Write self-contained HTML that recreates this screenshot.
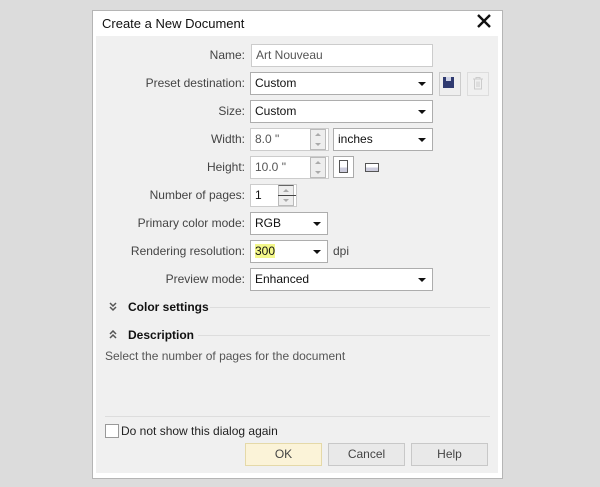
<!DOCTYPE html><html><head><style>
body{margin:0;width:600px;height:487px;background:#dcdcdc;position:relative;font-family:"Liberation Sans",sans-serif;font-size:12px;color:#222;overflow:hidden}
.a{position:absolute}
.dlg{left:92px;top:10px;width:409px;height:467px;background:#fff;border:1px solid #b5b5b5}
.cnt{left:96px;top:36px;width:402px;height:437px;background:#f0f0f0}
.lb{position:absolute;right:355px;text-align:right;color:#444;white-space:nowrap}
.in{position:absolute;background:#fff;border:1px solid #adadad;box-sizing:border-box;height:23px;padding:3px 4px;white-space:nowrap;color:#111}
.dd::after{content:"";position:absolute;right:6px;top:9px;border-left:4px solid transparent;border-right:4px solid transparent;border-top:4px solid #111}
.sp{position:absolute;width:16px;height:21px;border:1px solid #bbb;background:#eee;box-sizing:border-box}
.sp::before{content:"";position:absolute;left:4px;top:3px;border-left:3px solid transparent;border-right:3px solid transparent;border-bottom:3px solid #aaa}
.sp::after{content:"";position:absolute;left:4px;bottom:3px;border-left:3px solid transparent;border-right:3px solid transparent;border-top:3px solid #aaa}
.btn{position:absolute;top:443px;width:77px;height:23px;border:1px solid #c8c8c8;background:#e9e9e9;box-sizing:border-box;text-align:center;line-height:21px;color:#444}
.sec{position:absolute;left:128px;font-weight:bold;color:#111}
.ln{position:absolute;height:1px;background:#ddd}
</style></head><body>
<div class="a dlg"></div>
<div class="a cnt"></div>
<div class="a" style="left:102px;top:16px;font-size:13px;color:#111">Create a New Document</div>
<svg class="a" style="left:477px;top:14px" width="14" height="14" viewBox="0 0 14 14"><path d="M1 1L13 13M13 1L1 13" stroke="#111" stroke-width="2.4"/></svg>

<div class="lb" style="top:48px">Name:</div>
<div class="in" style="left:251px;top:44px;width:182px;color:#555;border-color:#ccc">Art Nouveau</div>

<div class="lb" style="top:76px">Preset destination:</div>
<div class="in dd" style="left:250px;top:72px;width:183px">Custom</div>
<div class="a" style="left:439px;top:72px;width:20px;height:22px;border:1px solid #ccc;background:#eee"></div>
<div class="a" style="left:443px;top:77px;width:11px;height:11px;background:#2f3a70"></div>
<div class="a" style="left:446px;top:77px;width:5px;height:4px;background:#cfd3e6"></div>
<div class="a" style="left:467px;top:72px;width:20px;height:22px;border:1px solid #ddd;background:#f0f0f0"></div>
<svg class="a" style="left:472px;top:76px" width="12" height="14" viewBox="0 0 12 14"><path d="M1 3H11M4 3V1.5H8V3M2.5 3.5V13H9.5V3.5M5 5.5V11M7 5.5V11" stroke="#ccc" fill="none"/></svg>

<div class="lb" style="top:104px">Size:</div>
<div class="in dd" style="left:250px;top:100px;width:183px">Custom</div>

<div class="lb" style="top:132px">Width:</div>
<div class="in" style="left:250px;top:128px;width:79px;color:#555;border-color:#ccc">8.0 "</div>
<div class="sp" style="left:310px;top:129px"></div>
<div class="in dd" style="left:333px;top:128px;width:100px">inches</div>

<div class="lb" style="top:160px">Height:</div>
<div class="in" style="left:250px;top:156px;width:79px;color:#555;border-color:#ccc">10.0 "</div>
<div class="sp" style="left:310px;top:157px"></div>
<div class="a" style="left:333px;top:156px;width:21px;height:22px;border:1px solid #aaa;background:#fff;box-sizing:border-box"></div>
<div class="a" style="left:339px;top:160px;width:9px;height:13px;border:1px solid #555;box-sizing:border-box;background:linear-gradient(#fff 60%,#ccd 60%)"></div>
<div class="a" style="left:365px;top:163px;width:14px;height:9px;border:1px solid #555;box-sizing:border-box;background:linear-gradient(#fff 50%,#ccd 50%)"></div>

<div class="lb" style="top:188px">Number of pages:</div>
<div class="in" style="left:250px;top:184px;width:47px;border-color:#ccc">1</div>
<div class="sp" style="left:278px;top:185px;border-top-color:#666"></div>
<div class="a" style="left:278px;top:195px;width:18px;height:1px;background:#444"></div>

<div class="lb" style="top:216px">Primary color mode:</div>
<div class="in dd" style="left:250px;top:212px;width:78px">RGB</div>

<div class="lb" style="top:244px">Rendering resolution:</div>
<div class="in dd" style="left:250px;top:240px;width:78px"><span style="background:#f3f78a">300</span></div>
<div class="a" style="left:333px;top:244px;color:#444">dpi</div>

<div class="lb" style="top:272px">Preview mode:</div>
<div class="in dd" style="left:250px;top:268px;width:183px">Enhanced</div>

<svg class="a" style="left:109px;top:302px" width="8" height="10" viewBox="0 0 8 10"><path d="M1 1L4 4L7 1M1 5L4 8L7 5" stroke="#555" stroke-width="1.5" fill="none"/></svg>
<div class="sec" style="top:300px">Color settings</div>
<div class="ln" style="left:210px;top:307px;width:280px"></div>
<svg class="a" style="left:109px;top:330px" width="8" height="10" viewBox="0 0 8 10"><path d="M1 4L4 1L7 4M1 8L4 5L7 8" stroke="#555" stroke-width="1.5" fill="none"/></svg>
<div class="sec" style="top:328px">Description</div>
<div class="ln" style="left:198px;top:335px;width:292px"></div>
<div class="a" style="left:105px;top:349px;color:#555">Select the number of pages for the document</div>

<div class="ln" style="left:105px;top:416px;width:385px"></div>
<div class="a" style="left:105px;top:424px;width:12px;height:12px;border:1px solid #999;background:#fff"></div>
<div class="a" style="left:121px;top:424px;color:#222">Do not show this dialog again</div>

<div class="btn" style="left:245px;background:#fbf3d8;border-color:#e5d9a8">OK</div>
<div class="btn" style="left:328px">Cancel</div>
<div class="btn" style="left:411px">Help</div>
</body></html>
